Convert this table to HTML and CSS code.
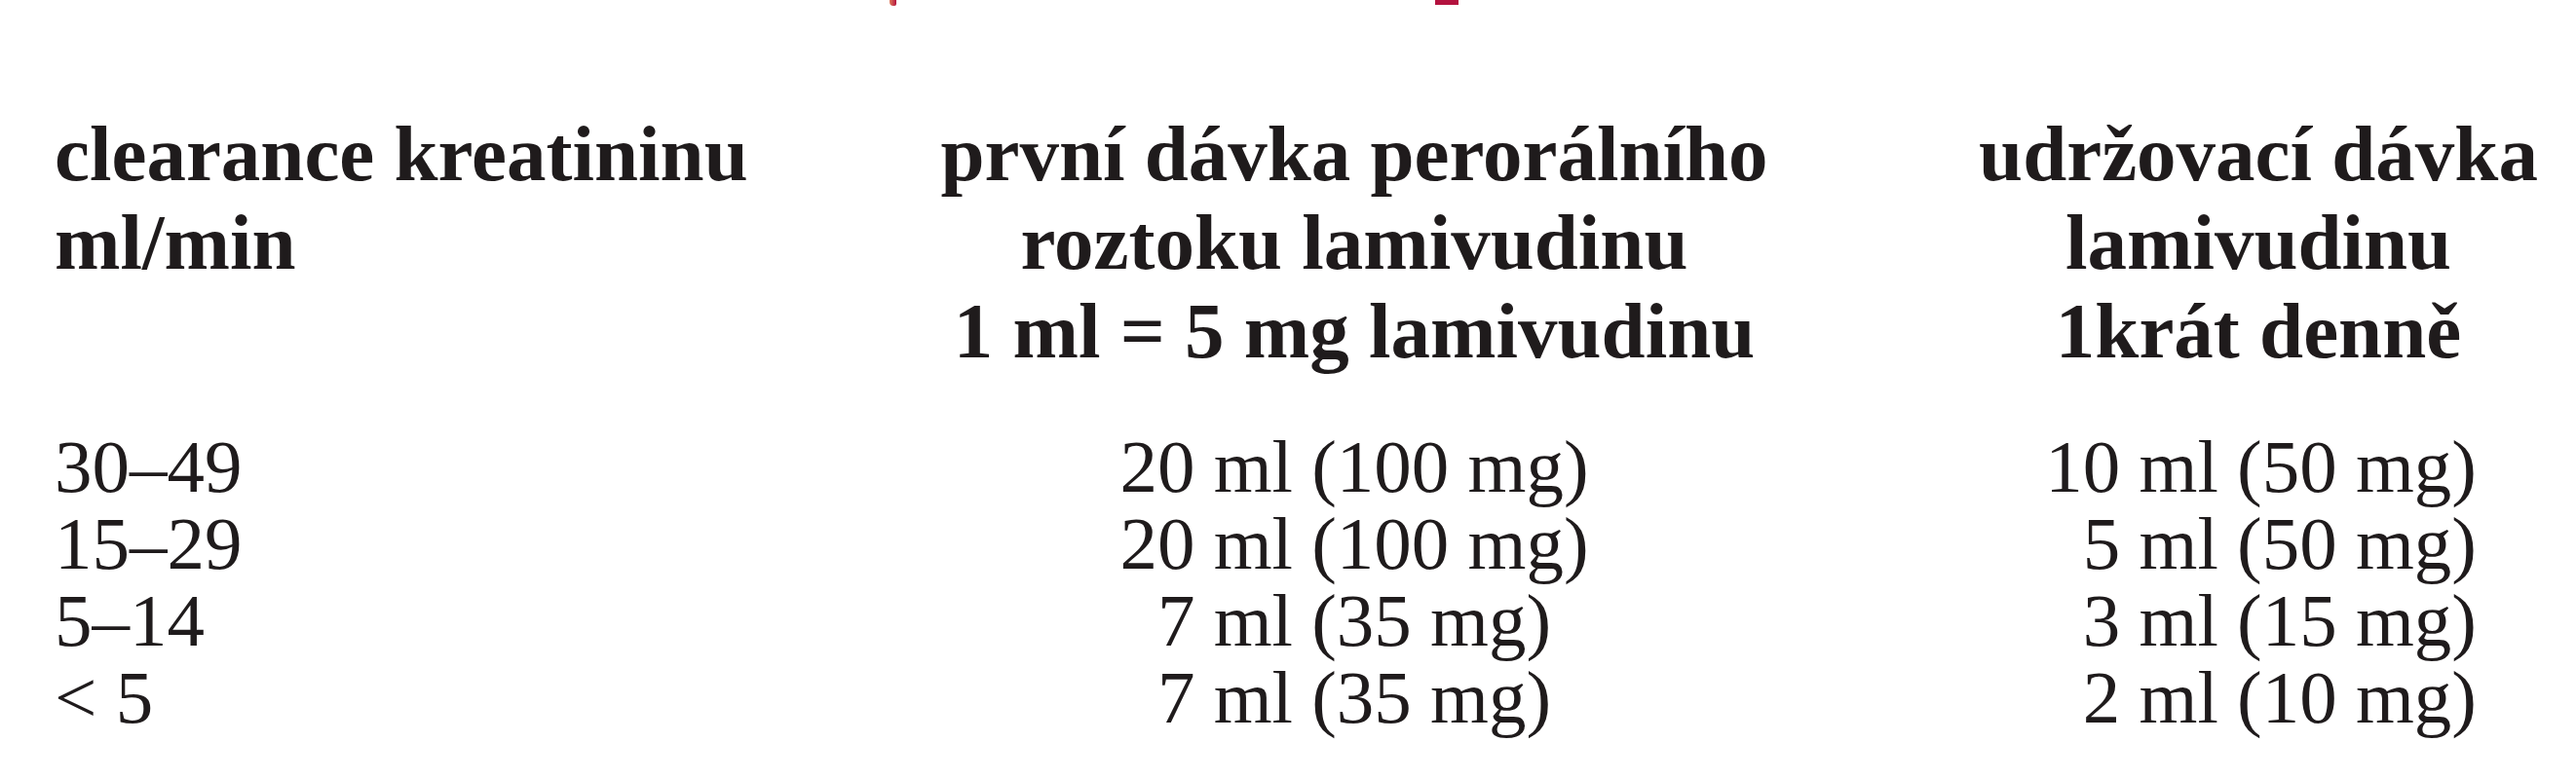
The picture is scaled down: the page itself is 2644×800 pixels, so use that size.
FILE: index.html
```html
<!DOCTYPE html>
<html lang="cs">
<head>
<meta charset="utf-8">
<title>Dávkování lamivudinu</title>
<link rel="stylesheet" href="styles.css">
</head>
<body>
<div class="title-strip" aria-hidden="true">
  <span class="mark mark-y"></span>
  <span class="mark mark-p"></span>
</div>
<div class="dose-table">
  <div class="row head">
    <div class="cell c1">clearance kreatininu<br>ml/min</div>
    <div class="cell c2">první dávka perorálního<br>roztoku lamivudinu<br>1 ml = 5 mg lamivudinu</div>
    <div class="cell c3">udržovací dávka<br>lamivudinu<br>1krát denně</div>
  </div>
  <div class="body">
    <div class="row data">
      <div class="cell c1">30–49</div>
      <div class="cell c2">20 ml (100 mg)</div>
      <div class="cell c3">10 ml (50 mg)</div>
    </div>
    <div class="row data">
      <div class="cell c1">15–29</div>
      <div class="cell c2">20 ml (100 mg)</div>
      <div class="cell c3">5 ml (50 mg)</div>
    </div>
    <div class="row data">
      <div class="cell c1">5–14</div>
      <div class="cell c2">7 ml (35 mg)</div>
      <div class="cell c3">3 ml (15 mg)</div>
    </div>
    <div class="row data">
      <div class="cell c1">&lt; 5</div>
      <div class="cell c2">7 ml (35 mg)</div>
      <div class="cell c3">2 ml (10 mg)</div>
    </div>
  </div>
</div>
</body>
</html>
```
FILE: styles.css
```css
html, body {
  margin: 0;
  padding: 0;
  background: #ffffff;
}

body {
  width: 2644px;
  height: 800px;
  overflow: hidden;
  font-family: "Liberation Serif", "Times New Roman", serif;
  color: #1f1b1c;
}

.title-strip {
  height: 6px;
  display: flex;
}

.mark {
  display: block;
  background: #b3123f;
}

.mark-y {
  width: 7px;
  height: 6px;
  margin-left: 913px;
  border-radius: 0 0 2px 4px;
  background: linear-gradient(90deg, #e07a5a, #b3123f);
}

.mark-p {
  width: 24px;
  height: 5px;
  margin-left: 553px;
}

.dose-table {
  padding: 107px 0 0 56px;
}

.row {
  display: grid;
  grid-template-columns: 724px 1220px 636px;
}

.cell {
  white-space: nowrap;
}

.head .cell {
  font-weight: bold;
  font-size: 81px;
  line-height: 91px;
}

.head .c2,
.head .c3 {
  text-align: center;
}

.body {
  margin-top: 54px;
}

.data .cell {
  font-size: 77px;
  line-height: 79px;
}

.data .c2 {
  text-align: center;
}

.data .c3 {
  text-align: right;
  padding-right: 94px;
}
```
